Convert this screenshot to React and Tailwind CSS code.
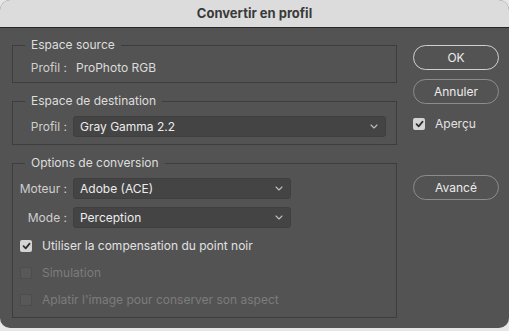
import React from 'react';

const font = { fontFamily: 'Inter, "Liberation Sans", sans-serif' };

function Chevron() {
  return (
    <svg width="8" height="5" viewBox="0 0 8 5" className="shrink-0">
      <path d="M1 1l3 3 3-3" fill="none" stroke="#bdbdbd" strokeWidth="1.1" strokeLinecap="round" strokeLinejoin="round" />
    </svg>
  );
}

function Select({ value, className = '' }) {
  return (
    <div className={`flex h-[21px] items-center justify-between rounded-[3px] border border-[#3f3f3f] bg-[#444444] pl-[6px] pr-[7px] ${className}`}>
      <span className="text-[12px] leading-none text-[#ececec]">{value}</span>
      <Chevron />
    </div>
  );
}

function Check({ checked, disabled }) {
  if (checked) {
    return (
      <div className="flex h-[12px] w-[12px] items-center justify-center rounded-[2px] bg-[#d4d4d4]">
        <svg width="9" height="8" viewBox="0 0 9 8">
          <path d="M1.5 4.2l2.2 2.2L7.6 1.6" fill="none" stroke="#2e2e2e" strokeWidth="1.7" strokeLinecap="round" strokeLinejoin="round" />
        </svg>
      </div>
    );
  }
  return <div className={`h-[12px] w-[12px] rounded-[2px] border ${disabled ? 'border-[#4d4d4d] bg-[#585858]' : 'border-[#777] bg-[#555]'}`} />;
}

// group box: the title sits on the top border line
function Group({ title, children, className = '' }) {
  return (
    <div className={`border border-[#3d3d3d] ${className}`}>
      <div className="-mt-[9px] ml-[12px] w-fit bg-[#535353] px-[6px] text-[12px] leading-[16px] text-[#dedede]">{title}</div>
      {children}
    </div>
  );
}

function Button({ children, strong, className = '' }) {
  return (
    <div className={`flex h-[25px] w-[86px] items-center justify-center rounded-full border text-[12px] text-[#ececec] ${strong ? 'border-[#d0d0d0]' : 'border-[#8c8c8c]'} ${className}`}>
      {children}
    </div>
  );
}

export default function App() {
  return (
    <div className="h-[331px] w-[509px] bg-[#e6e6e6]" style={font}>
      <div className="flex h-[328px] w-[509px] flex-col overflow-hidden rounded-[10px] bg-[#535353]">
        <div className="flex h-[28px] items-center justify-center border-b border-[#262626] bg-[#dcdcdc]">
          <span className="text-[13px] font-bold text-[#3a3a3a]">Convertir en profil</span>
        </div>
        <div className="flex pt-[17px]">
          <div className="ml-[12px] w-[385px]">
            <Group title="Espace source" className="pb-[6px]">
              <div className="mt-[7px] flex h-[16px] items-center text-[12px]">
                <span className="w-[54px] text-right text-[#cfcfcf]">Profil :</span>
                <span className="ml-[9px] text-[#dcdcdc]">ProPhoto RGB</span>
              </div>
            </Group>
            <Group title="Espace de destination" className="mt-[18px] pb-[7px]">
              <div className="mt-[7px] flex items-center text-[12px]">
                <span className="w-[54px] text-right text-[#cfcfcf]">Profil :</span>
                <Select value="Gray Gamma 2.2" className="ml-[6px] w-[313px]" />
              </div>
            </Group>
            <Group title="Options de conversion" className="mt-[18px] pb-[9px]">
              <div className="mt-[7px] flex items-center text-[12px]">
                <span className="w-[54px] text-right text-[#cfcfcf]">Moteur :</span>
                <Select value="Adobe (ACE)" className="ml-[6px] w-[218px]" />
              </div>
              <div className="mt-[8px] flex items-center text-[12px]">
                <span className="w-[54px] text-right text-[#cfcfcf]">Mode :</span>
                <Select value="Perception" className="ml-[6px] w-[218px]" />
              </div>
              <div className="mt-[10px] flex h-[16px] items-center pl-[7px]">
                <Check checked />
                <span className="ml-[10px] text-[12px] text-[#e2e2e2]">Utiliser la compensation du point noir</span>
              </div>
              <div className="mt-[11px] flex h-[16px] items-center pl-[7px]">
                <Check disabled />
                <span className="ml-[10px] text-[12px] text-[#7c7c7c]">Simulation</span>
              </div>
              <div className="mt-[11px] flex h-[16px] items-center pl-[7px]">
                <Check disabled />
                <span className="ml-[10px] text-[12px] text-[#7c7c7c]">Aplatir l'image pour conserver son aspect</span>
              </div>
            </Group>
          </div>
          <div className="ml-[16px] flex flex-col">
            <Button strong>OK</Button>
            <Button className="mt-[9px]">Annuler</Button>
            <div className="mt-[11px] flex items-center">
              <Check checked />
              <span className="ml-[10px] text-[12px] text-[#e2e2e2]">Aperçu</span>
            </div>
            <Button className="mt-[42px]">Avancé</Button>
          </div>
        </div>
      </div>
    </div>
  );
}
